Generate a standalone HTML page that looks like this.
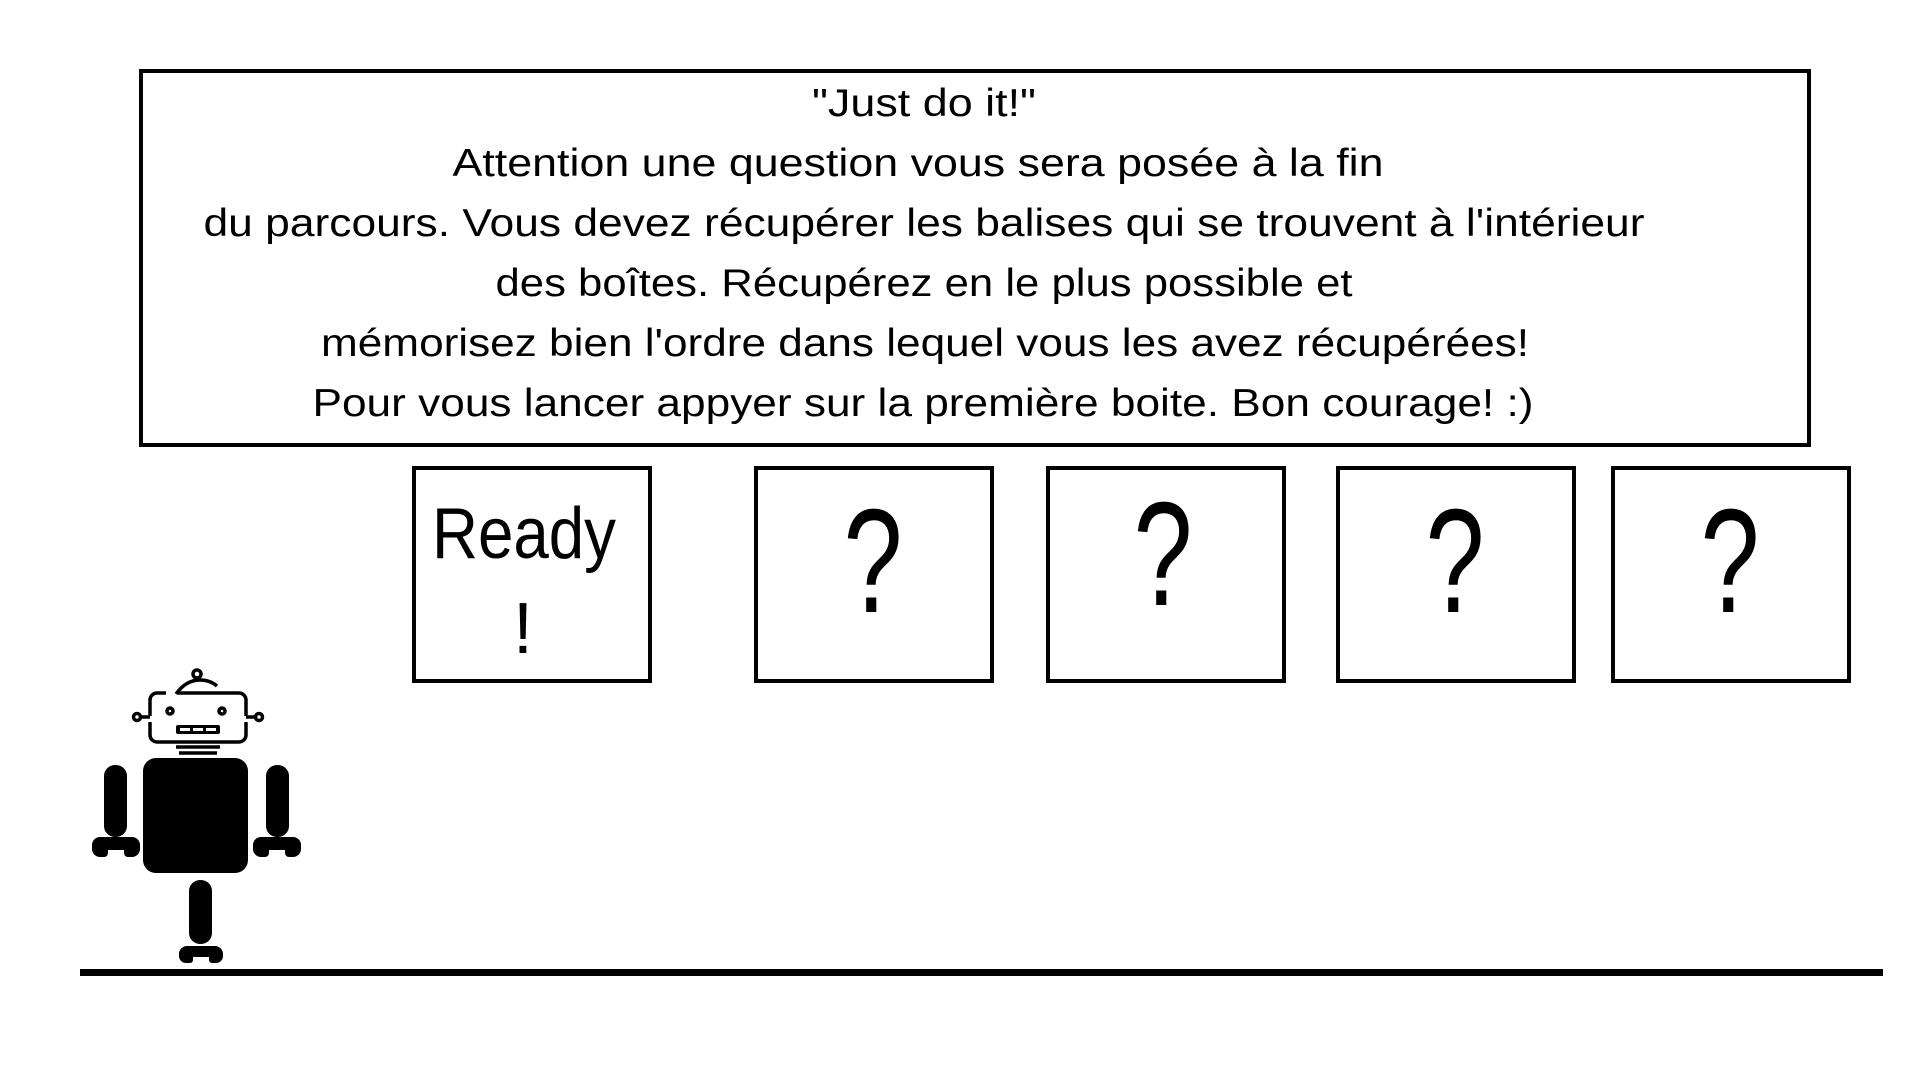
<!DOCTYPE html>
<html><head><meta charset="utf-8"><style>
html,body{margin:0;padding:0;background:#fff;width:1920px;height:1080px;overflow:hidden}
svg{display:block}
text{font-family:"Liberation Sans",sans-serif;fill:#000}
</style></head><body>
<svg width="1920" height="1080" viewBox="0 0 1920 1080" xmlns="http://www.w3.org/2000/svg">
<rect x="141" y="71" width="1668" height="374" fill="none" stroke="#000" stroke-width="4"/>
<g font-size="39" text-anchor="middle">
<text x="924" y="116" textLength="224" lengthAdjust="spacingAndGlyphs">"Just do it!"</text>
<text x="918" y="176" textLength="931" lengthAdjust="spacingAndGlyphs">Attention une question vous sera posée à la fin</text>
<text x="924" y="236" textLength="1441" lengthAdjust="spacingAndGlyphs">du parcours. Vous devez récupérer les balises qui se trouvent à l'intérieur</text>
<text x="924" y="296" textLength="857" lengthAdjust="spacingAndGlyphs">des boîtes. Récupérez en le plus possible et</text>
<text x="925" y="356" textLength="1208" lengthAdjust="spacingAndGlyphs">mémorisez bien l'ordre dans lequel vous les avez récupérées!</text>
<text x="923" y="416" textLength="1221" lengthAdjust="spacingAndGlyphs">Pour vous lancer appyer sur la première boite. Bon courage! :)</text>
</g>
<g fill="none" stroke="#000" stroke-width="4">
<rect x="414" y="468" width="236" height="213"/>
<rect x="756" y="468" width="236" height="213"/>
<rect x="1048" y="468" width="236" height="213"/>
<rect x="1338" y="468" width="236" height="213"/>
<rect x="1613" y="468" width="236" height="213"/>
</g>
<text x="524" y="558" font-size="72" text-anchor="middle" textLength="184" lengthAdjust="spacingAndGlyphs">Ready</text>
<text x="523" y="653" font-size="72" text-anchor="middle">!</text>
<g font-size="148" text-anchor="middle">
<text x="873" y="612" textLength="59" lengthAdjust="spacingAndGlyphs">?</text>
<text x="1163" y="605" textLength="59" lengthAdjust="spacingAndGlyphs">?</text>
<text x="1455" y="612" textLength="59" lengthAdjust="spacingAndGlyphs">?</text>
<text x="1730" y="612" textLength="59" lengthAdjust="spacingAndGlyphs">?</text>
</g>
<rect x="80" y="969" width="1803" height="7" fill="#000"/>
<g fill="#000">
<rect x="143" y="758" width="105" height="115" rx="13"/>
<rect x="104" y="765" width="23" height="72" rx="11"/>
<rect x="266" y="765" width="23" height="72" rx="11"/>
<path d="M92 845 a8 8 0 0 1 8 -8 h32 a8 8 0 0 1 8 8 v4 a8 8 0 0 1 -8 8 h-4 a4 4 0 0 1 -4 -4 v-3 h-16 v3 a4 4 0 0 1 -4 4 h-4 a8 8 0 0 1 -8 -8z"/>
<path d="M253 845 a8 8 0 0 1 8 -8 h32 a8 8 0 0 1 8 8 v4 a8 8 0 0 1 -8 8 h-4 a4 4 0 0 1 -4 -4 v-3 h-16 v3 a4 4 0 0 1 -4 4 h-4 a8 8 0 0 1 -8 -8z"/>
<rect x="189" y="880" width="23" height="64" rx="11"/>
<path d="M179 954 a8 8 0 0 1 8 -8 h28 a8 8 0 0 1 8 8 v2 a7 7 0 0 1 -7 7 h-4 a3 3 0 0 1 -3 -3 v-3 h-16 v3 a3 3 0 0 1 -3 3 h-4 a7 7 0 0 1 -7 -7z"/>
<rect x="176" y="725" width="44" height="9" rx="2"/>
</g>
<g fill="none" stroke="#000" stroke-width="3.5">
<path d="M150 722 v13 a7 7 0 0 0 7 7 h82 a7 7 0 0 0 7 -7 v-13 M150 716 v-16 a7 7 0 0 1 7 -7 h9 M178 693 h61 a7 7 0 0 1 7 7 v16"/>
<path d="M176 694 q10 -14 24 -14 q10 0 17 6"/>
<circle cx="197" cy="674" r="4"/>
<circle cx="137" cy="717" r="3.5"/>
<path d="M141 717 h9"/>
<circle cx="259" cy="717" r="3.5"/>
<path d="M246 717 h9"/>
<circle cx="170" cy="711" r="3"/>
<circle cx="222" cy="711" r="3"/>
<path d="M176 747 h44 M179 753 h38"/>
</g>
<g fill="#fff"><rect x="180" y="728" width="10" height="3"/><rect x="193" y="728" width="10" height="3"/><rect x="206" y="728" width="10" height="3"/></g>
</svg>
</body></html>
